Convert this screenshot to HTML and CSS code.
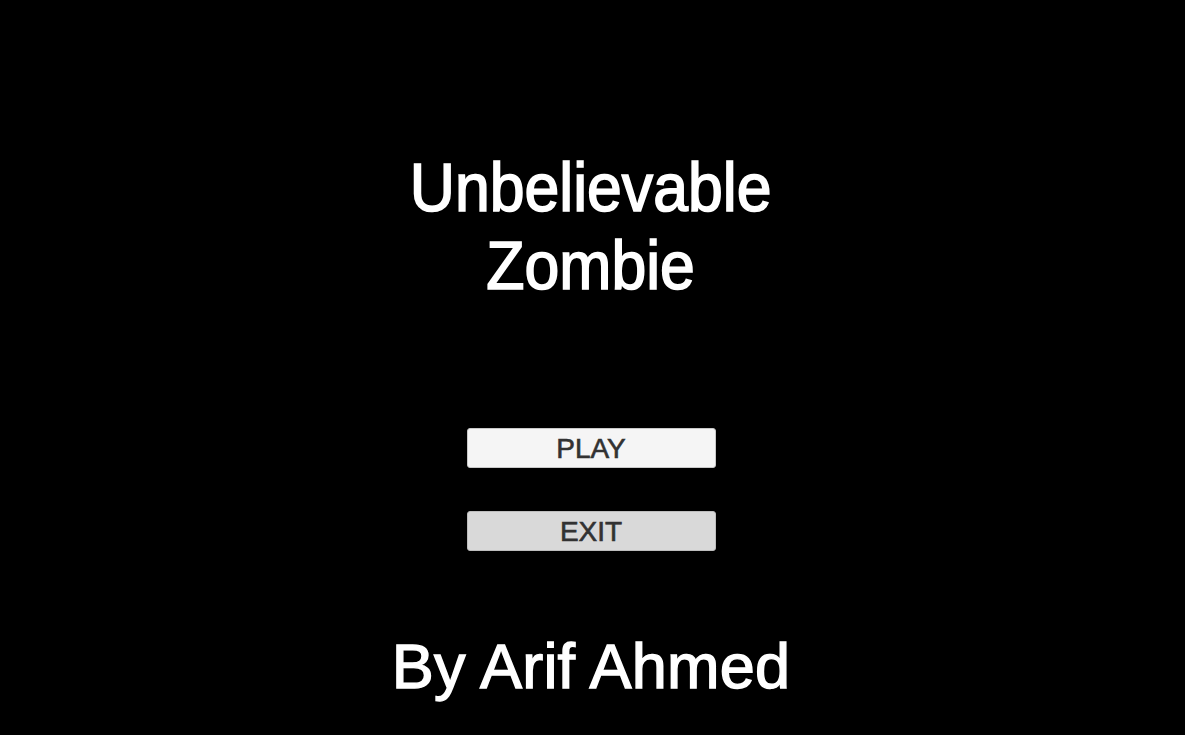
FILE: index.html
```html
<!DOCTYPE html>
<html lang="en">
<head>
    <meta charset="UTF-8">
    <title>Unbelievable Zombie</title>
    <link rel="stylesheet" href="styles.css">
</head>
<body>
<div class="menu">
    <h1 class="title">Unbelievable<br>Zombie</h1>
    <div class="buttons">
        <div class="btn btn-play">PLAY</div>
        <div class="btn btn-exit">EXIT</div>
    </div>
    <div class="author">By Arif Ahmed</div>
</div>
</body>
</html>
```

FILE: styles.css
```css
html, body {
    margin: 0;
    height: 100%;
    background: #000;
}

.menu {
    display: flex;
    flex-direction: column;
    align-items: center;
    padding: 148px 3px 0 0;
    font-family: "Liberation Sans", Arial, sans-serif;
    color: #fff;
}

/* title font is a touch narrower than the rest */
.title {
    margin: 0;
    font-size: 68px;
    font-weight: normal;
    line-height: 78px;
    text-align: center;
    transform: scaleX(0.92);
    -webkit-text-stroke: 1.7px #fff;
}

.buttons {
    display: flex;
    flex-direction: column;
    gap: 43px;
    margin-top: 124px;
}

.btn {
    width: 247px;
    height: 38px;
    line-height: 39px;
    text-align: center;
    font-size: 28px;
    color: #323232;
    -webkit-text-stroke: 0.6px #323232;
    border: 1px solid #c8c8c8;
    border-radius: 3px;
}

.btn-play {
    background: #f5f5f5;
}

.btn-exit {
    background: #d9d9d9;
    border-color: #bdbdbd;
}

.author {
    margin-top: 80px;
    font-size: 63px;
    line-height: 70px;
    letter-spacing: 0.2px;
    -webkit-text-stroke: 1.4px #fff;
}
```
